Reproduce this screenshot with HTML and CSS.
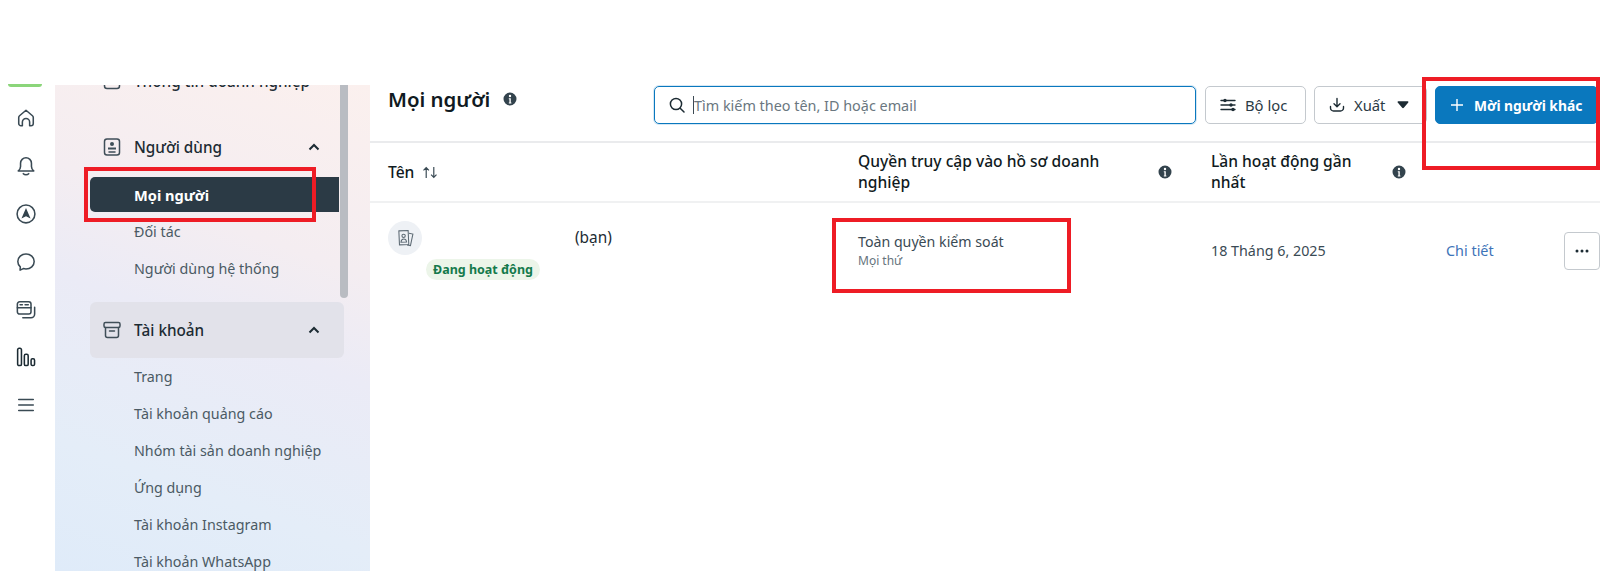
FILE: index.html
```html
<!DOCTYPE html>
<html lang="vi">
<head>
<meta charset="utf-8">
<title>Mọi người</title>
<link rel="stylesheet" href="styles.css">
</head>
<body>
<div class="page">
  <div class="topgap"></div>
  <div class="app">
    <nav class="rail">
      <span class="rail-mark"></span>
      <svg class="rail-icon" viewBox="0 0 22 22"><path d="M7 19.500H5.500A2.500 2.500 0 0 1 3 17v-6.500c0-.8.3-1.400.9-1.900L11 2.500l7.100 6.100c.6.500.9 1.100.9 1.900V17a2.500 2.500 0 0 1-2.500 2.500H15v-4a4 4 0 0 0-8 0z"/></svg>
      <svg class="rail-icon" viewBox="0 0 22 22"><path d="M2.500 16.500c1.500-1.300 2.500-2.500 2.500-5V8a6 6 0 0 1 12 0v3.500c0 2.500 1 3.700 2.500 5zM8 19.500c1.500 1.500 4.500 1.500 6 0"/></svg>
      <svg class="rail-icon" viewBox="0 0 22 22"><circle cx="11" cy="11" r="9.800"/><path class="solid" d="M11 4.500l5 11.500-5-2.500-5 2.500z"/></svg>
      <svg class="rail-icon" viewBox="0 0 22 22"><path d="M11 2.200c5 0 9 3.700 9 8.300s-4 8.300-9 8.300c-1 0-2-.2-3-.5l-3.500 1.700.2-3.600C3 14.900 2 12.800 2 10.500c0-4.600 4-8.300 9-8.300z"/></svg>
      <svg class="rail-icon" viewBox="0 0 22 22"><rect x="1.500" y="2" width="15" height="13.500" rx="2.500"/><path d="M1.500 8.500h15M20.500 8v7.500a4 4 0 0 1-4 4H7.500"/><path d="M4.500 5.300h2.500M10 5.300h3.500"/></svg>
      <svg class="rail-icon" viewBox="0 0 22 22"><rect x="1.800" y="1.500" width="4.200" height="19" rx="1.600"/><rect x="9.200" y="8" width="4.200" height="12.500" rx="1.600"/><rect x="16.600" y="13" width="3.800" height="7.500" rx="1.500"/></svg>
      <svg class="rail-icon" viewBox="0 0 22 22"><path d="M3 5h16M3 11h16M3 17h16"/></svg>
    </nav>

    <aside class="sidebar">
      <div class="side-scroll">
        <div class="side-group first">
          <svg class="side-icon" viewBox="0 0 18 18"><rect x="1.500" y="1.500" width="15" height="15" rx="2.500"/></svg>
          <span class="side-title">Thông tin doanh nghiệp</span>
        </div>
        <div class="side-group">
          <svg class="side-icon" viewBox="0 0 18 18"><rect x="1.500" y="1" width="15" height="16" rx="2.500"/><circle class="solid" cx="9" cy="6" r="2"/><path class="solid" d="M5 9.500h8v2H5z"/><path d="M6 14h6"/></svg>
          <span class="side-title">Người dùng</span>
          <svg class="chevron" viewBox="0 0 12 8"><path d="M1.500 6.500L6 2l4.500 4.500"/></svg>
        </div>
        <a class="side-link active">Mọi người</a>
        <a class="side-link">Đối tác</a>
        <a class="side-link">Người dùng hệ thống</a>
        <div class="side-group boxed">
          <svg class="side-icon" viewBox="0 0 18 18"><rect x="1" y="1.500" width="16" height="5" rx="1.500"/><path d="M2.500 6.500v8a2 2 0 0 0 2 2h9a2 2 0 0 0 2-2v-8M6.500 10h5"/></svg>
          <span class="side-title">Tài khoản</span>
          <svg class="chevron" viewBox="0 0 12 8"><path d="M1.500 6.500L6 2l4.500 4.500"/></svg>
        </div>
        <a class="side-link">Trang</a>
        <a class="side-link">Tài khoản quảng cáo</a>
        <a class="side-link">Nhóm tài sản doanh nghiệp</a>
        <a class="side-link">Ứng dụng</a>
        <a class="side-link">Tài khoản Instagram</a>
        <a class="side-link">Tài khoản WhatsApp</a>
      </div>
      <div class="scrollbar"></div>
    </aside>

    <main class="main">
      <header class="toolbar">
        <div class="heading">
          <h1>Mọi người</h1>
          <svg class="info big" viewBox="0 0 14 14"><use href="#info"/></svg>
        </div>
        <div class="search">
          <svg class="search-icon" viewBox="0 0 16 16"><circle cx="7" cy="7" r="5.600"/><path d="M11.200 11.200L15 15"/></svg>
          <span class="caret"></span>
          <span class="placeholder">Tìm kiếm theo tên, ID hoặc email</span>
        </div>
        <button class="btn filter">
          <svg class="btn-icon" viewBox="0 0 16 16"><path d="M1 3.500h14M1 8h14M1 12.500h14"/><circle class="solid" cx="5" cy="3.500" r="1.700"/><circle class="solid" cx="11" cy="8" r="1.700"/><circle class="solid" cx="13" cy="12.500" r="1.700"/></svg>
          Bộ lọc
        </button>
        <button class="btn export">
          <svg class="btn-icon" viewBox="0 0 16 16"><path d="M8 1.500v8M5 6.800L8 9.800l3-3M1.500 9.500v1.500a3 3 0 0 0 3 3h7a3 3 0 0 0 3-3V9.500"/></svg>
          Xuất
          <svg class="caret-down" viewBox="0 0 12 8"><path d="M.5 1.200C.5.500 1 .2 1.500.2h9c.6 0 1.200.4.800 1.200L6.800 6.800c-.4.500-1.200.5-1.600 0z"/></svg>
        </button>
        <button class="btn invite">
          <svg class="plus" viewBox="0 0 12 12"><path d="M6 0v12M0 6h12"/></svg>
          Mời người khác
        </button>
      </header>

      <div class="table-head grid-row">
        <div class="th sort">Tên
          <svg class="sort-icon" viewBox="0 0 14 12"><path d="M3.500 11V1.500M1 4l2.500-2.500L6 4M10.500 1v9.500M8 8l2.500 2.500L13 8"/></svg>
        </div>
        <div class="th with-info"><span>Quyền truy cập vào hồ sơ doanh nghiệp</span><svg class="info" viewBox="0 0 14 14"><use href="#info"/></svg></div>
        <div class="th with-info last"><span>Lần hoạt động gần nhất</span><svg class="info" viewBox="0 0 14 14"><use href="#info"/></svg></div>
      </div>

      <div class="table-row grid-row">
        <div class="name-cell">
          <div class="avatar">
            <svg viewBox="0 0 18 18"><path d="M12.300 4l3.700.8-2.300 11-3.200-.7"/><path class="card-fill" d="M2.700 1.800l8.800-.4.600 13.200-8.800.4z"/><circle cx="7.200" cy="6.500" r="1.600"/><path d="M4.700 12.500c.2-2 1.300-3 2.600-3s2.500.9 2.700 2.800z"/></svg>
          </div>
          <span class="you">(bạn)</span>
          <span class="badge">Đang hoạt động</span>
        </div>
        <div class="access">
          <div class="access-main">Toàn quyền kiểm soát</div>
          <div class="access-sub">Mọi thứ</div>
        </div>
        <div class="date">18 Tháng 6, 2025</div>
        <a class="detail">Chi tiết</a>
        <button class="more"><svg viewBox="0 0 14 4"><circle cx="2" cy="2" r="1.500"/><circle cx="7" cy="2" r="1.500"/><circle cx="12" cy="2" r="1.500"/></svg></button>
      </div>
    </main>
  </div>

  <div class="mark mark-people"></div>
  <div class="mark mark-access"></div>
  <div class="mark mark-invite"></div>
</div>

<svg class="defs" width="0" height="0">
  <symbol id="info" viewBox="0 0 14 14">
    <path fill-rule="evenodd" d="M7 .5a6.500 6.500 0 1 1 0 13 6.500 6.500 0 0 1 0-13zM7 2.800a1.200 1.200 0 1 0 0 2.400 1.200 1.200 0 0 0 0-2.400zM5.800 6.200v1h.6v3.200h-.6v1h2.600v-1h-.6V6.200z"/>
  </symbol>
</svg>
</body>
</html>
```

FILE: styles.css
```css
* { box-sizing: border-box; }
html, body { margin: 0; height: 100%; }
body { background: #fff; color: #1c2b33; font-family: "Noto Sans", "Liberation Sans", sans-serif; font-size: 15px; overflow: hidden; }
svg { display: block; flex: none; }
.defs { position: absolute; }
.page { position: relative; width: 1600px; height: 571px; overflow: hidden; display: flex; flex-direction: column; }
.topgap { height: 85px; flex: none; }
.app { flex: 1; min-height: 0; display: flex; }

/* Rail */
.rail { position: relative; width: 55px; flex: none; display: flex; flex-direction: column; align-items: center; padding: 9px 4px 0 0; }
.rail-mark { position: absolute; left: 8px; top: -1px; width: 34px; height: 3px; border-radius: 0 0 4px 4px; background: #8bd57a; }
.rail-icon { width: 20px; height: 47.9px; padding: 13.95px 0; fill: none; stroke: #3a4a54; stroke-width: 1.7; stroke-linejoin: round; stroke-linecap: round; overflow: visible; }
.rail-icon:nth-of-type(6) { stroke: #1c2b33; }
.rail-icon .solid { fill: #33434d; stroke: none; }

/* Sidebar */
.sidebar { position: relative; width: 315px; flex: none; overflow: hidden; padding: 0 26px 0 35px; background: linear-gradient(200deg, #fbf0ee 0%, #f4edf1 32%, #ebebf6 50%, #e4edf8 78%, #dfebf9 100%); }
.side-scroll { margin-top: -22px; display: flex; flex-direction: column; }
.side-group { display: flex; align-items: center; height: 56px; padding: 0 24px 0 13px; border-radius: 6px; flex: none; }
.side-group.first { height: 36px; margin-bottom: 30px; }
.side-group.boxed { background: #e2e2ea; margin-top: 15px; margin-bottom: 0; }
.side-group:nth-child(2) { height: 35px; margin-bottom: 13px; }
.side-icon { width: 18px; height: 18px; margin-right: 13px; fill: none; stroke: #3f4e58; stroke-width: 1.5; stroke-linecap: round; }
.side-icon .solid { fill: #3f4e58; stroke: none; }
.side-title { flex: 1; font-size: 15.3px; font-weight: 500; color: #1c2b33; white-space: nowrap; }
.chevron { width: 12px; height: 8px; fill: none; stroke: #1c2b33; stroke-width: 2; }
.side-link { display: flex; align-items: center; height: 37px; padding-left: 44px; font-size: 14.3px; color: #4b5a64; white-space: nowrap; flex: none; }
.side-link.active { height: 35px; margin-bottom: 1px; margin-right: 5px; background: #2b3a45; color: #fff; font-weight: 700; font-size: 14.6px; border-radius: 5px 0 0 5px; }
.scrollbar { position: absolute; left: 285px; top: 0; width: 8px; height: 213px; background: #b9bcc2; border-radius: 0 0 4px 4px; }

/* Main */
.main { flex: 1; min-width: 0; display: flex; flex-direction: column; }
.toolbar { height: 58px; flex: none; display: flex; align-items: flex-start; padding: 1px 0 0 18px; border-bottom: 2px solid #eaebed; }
.heading { width: 266px; flex: none; display: flex; align-items: center; gap: 13px; height: 26px; }
h1 { margin: 0; font-size: 20.4px; font-weight: 600; color: #101a21; line-height: 26px; }
.info { width: 14px; height: 14px; fill: #33434d; }
.search { width: 542px; height: 38px; flex: none; margin-right: 9px; display: flex; align-items: center; padding-left: 14px; border: 1px solid #0a78be; border-radius: 5px; box-shadow: 0 0 0 1px #d5e7f4; }
.search-icon { width: 16px; height: 16px; margin-right: 8px; fill: none; stroke: #1c2b33; stroke-width: 1.5; stroke-linecap: round; }
.caret { width: 1px; height: 18px; background: #3c4a54; }
.placeholder { font-size: 14.4px; color: #6a7780; white-space: nowrap; }
.btn { height: 38px; flex: none; display: flex; align-items: center; font: inherit; font-size: 14.8px; color: #2b3a45; background: #fff; border: 1px solid #c4c9ce; border-radius: 5px; padding: 0; }
.btn-icon { width: 16px; height: 16px; fill: none; stroke: #1c2b33; stroke-width: 1.4; stroke-linecap: round; stroke-linejoin: round; }
.btn-icon .solid { fill: #1c2b33; stroke: none; }
.filter { width: 101px; margin-right: 8px; padding-left: 14px; gap: 9px; }
.export { width: 113px; margin-right: 8px; padding-left: 14px; gap: 9px; }
.caret-down { width: 12px; height: 8px; fill: #1c2b33; margin-left: 3px; }
.invite { width: 163px; padding-left: 15px; gap: 11px; background: #0a78be; border-color: #0a78be; color: #fff; font-weight: 700; font-size: 13.8px; }
.plus { width: 12px; height: 12px; fill: none; stroke: #fff; stroke-width: 1.4; }

/* Table */
.grid-row { display: grid; grid-template-columns: 470px 353px 235px 118px 36px; padding-left: 18px; width: 1230px; }
.table-head { height: 60px; flex: none; align-items: center; border-bottom: 2px solid #f0f1f2; }
.th { font-size: 15.6px; font-weight: 500; line-height: 21px; color: #101a21; display: flex; align-items: center; }
.sort { gap: 8px; }
.sort-icon { width: 16px; height: 13px; fill: none; stroke: #3a4a54; stroke-width: 1.1; }
.with-info span { width: 264px; flex: none; }
.with-info .info { margin-left: 36px; }
.with-info.last { grid-column: 3 / span 2; }
.with-info.last span { width: 150px; }
.with-info.last .info { margin-left: 31px; }
.table-row { padding-top: 18px; align-items: center; }
.name-cell { display: grid; grid-template-columns: 187px auto; justify-content: start; row-gap: 4px; }
.avatar { width: 34px; height: 34px; border-radius: 50%; background: #eef1f5; display: flex; align-items: center; justify-content: center; }
.avatar svg { width: 19px; height: 19px; fill: none; stroke: #5d6a74; stroke-width: 1; }
.you { font-size: 15.4px; color: #1c2b33; line-height: 33px; height: 34px; }
.badge { grid-column: 1 / span 2; justify-self: start; margin-left: 38px; height: 21px; padding: 0 7px; border-radius: 11px; background: #ecf5e9; color: #157a4c; font-size: 12.5px; font-weight: 700; line-height: 21px; white-space: nowrap; }
.access { align-self: start; padding-top: 10px; }
.access-main { font-size: 14.2px; line-height: 22px; color: #3a4a54; }
.access-sub { font-size: 12px; line-height: 16px; color: #66737d; }
.date { font-size: 14.3px; color: #3a4a54; }
.detail { font-size: 14.4px; color: #3d74b8; }
.more { width: 36px; height: 38px; padding: 0; background: #fff; border: 1px solid #c4c9ce; border-radius: 4px; display: flex; align-items: center; justify-content: center; }
.more svg { width: 14px; height: 4px; fill: #1c2b33; }

/* Annotation rectangles drawn over the screenshot */
.mark { position: absolute; border: 4px solid #ee1c25; pointer-events: none; }
.mark-people { left: 84px; top: 167px; width: 232px; height: 55px; }
.mark-access { left: 832px; top: 218px; width: 239px; height: 75px; }
.mark-invite { left: 1422px; top: 77px; width: 178px; height: 93px; }
```
